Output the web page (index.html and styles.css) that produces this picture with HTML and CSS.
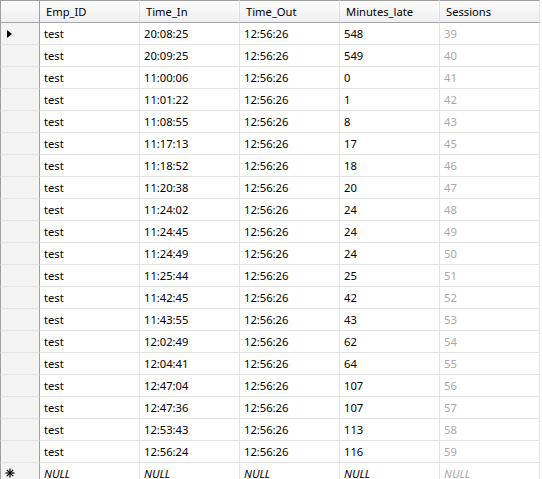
FILE: index.html
```html
<!DOCTYPE html>
<html>
<head>
<meta charset="utf-8">
<link rel="stylesheet" href="styles.css">
</head>
<body>
<div class="grid">
  <div class="hd sel"></div>
  <div class="hd">Emp_ID</div>
  <div class="hd">Time_In</div>
  <div class="hd">Time_Out</div>
  <div class="hd">Minutes_late</div>
  <div class="hd">Sessions</div>
</div>
<div class="grid" id="rows"></div>
<script src="app.js"></script>
</body>
</html>
```
FILE: styles.css
```css
html, body { margin: 0; padding: 0; background: #fff; }
body {
  font-family: "Segoe UI", "Noto Sans", "Open Sans", sans-serif;
  font-size: 11.2px;
  color: #000;
  width: 542px;
  height: 479px;
  overflow: hidden;
}
.grid {
  display: grid;
  grid-template-columns: 40px repeat(5, 100px);
  width: 540px;
}
.grid > div {
  height: 21px;
  line-height: 22px;
  border-right: 1px solid #e3e3e3;
  border-bottom: 1px solid #e3e3e3;
  padding-left: 4px;
  white-space: nowrap;
  overflow: hidden;
  box-sizing: content-box;
  width: calc(100% - 5px);
}
.hd {
  background: linear-gradient(#fcfcfc, #efeff2);
  border-top: 1px solid #a0a0a0;
  height: 21px !important;
  line-height: 21px !important;
  border-bottom: 1px solid #a5a5a5 !important;
  border-right: 1px solid #dedee4 !important;
  padding-left: 6px !important;
  width: calc(100% - 7px) !important;
}
.hd.sel {
  border-right: 1px solid #a0a0a0 !important;
  border-left: 1px solid #a0a0a0;
  padding-left: 0 !important;
  width: 38px !important;
}
.grid > .rs {
  background: #f3f3f3;
  border-left: 1px solid #a0a0a0;
  border-right: 1px solid #a0a0a0;
  border-bottom: 1px solid #e6e6e6;
  position: relative;
  padding-left: 0;
  width: 38px;
}
.ro { color: #a8a8a8; }
.null { font-style: italic; }
.arrow {
  position: absolute;
  left: 6px; top: 7px;
  width: 0; height: 0;
  border-top: 4px solid transparent;
  border-bottom: 4px solid transparent;
  border-left: 5px solid #000;
}
.star {
  position: absolute;
  left: 4px; top: 5px;
  width: 10px; height: 10px;
}
```
FILE: app.js
```js
var data = [
["20:08:25",548,39],["20:09:25",549,40],["11:00:06",0,41],["11:01:22",1,42],
["11:08:55",8,43],["11:17:13",17,45],["11:18:52",18,46],["11:20:38",20,47],
["11:24:02",24,48],["11:24:45",24,49],["11:24:49",24,50],["11:25:44",25,51],
["11:42:45",42,52],["11:43:55",43,53],["12:02:49",62,54],["12:04:41",64,55],
["12:47:04",107,56],["12:47:36",107,57],["12:53:43",113,58],["12:56:24",116,59]
];
var g = document.getElementById('rows');
var h = '';
data.forEach(function (r, i) {
  h += '<div class="rs">' + (i === 0 ? '<span class="arrow"></span>' : '') + '</div>' +
       '<div>test</div><div>' + r[0] + '</div><div>12:56:26</div><div>' + r[1] +
       '</div><div class="ro">' + r[2] + '</div>';
});
h += '<div class="rs"><svg class="star" viewBox="0 0 10 10"><g stroke="#000" stroke-width="1.2">' +
     '<line x1="5" y1="0.5" x2="5" y2="9.5"/><line x1="0.5" y1="5" x2="9.5" y2="5"/>' +
     '<line x1="1.8" y1="1.8" x2="8.2" y2="8.2"/><line x1="8.2" y1="1.8" x2="1.8" y2="8.2"/></g></svg></div>' +
     '<div class="null">NULL</div><div class="null">NULL</div><div class="null">NULL</div><div class="null">NULL</div><div class="null ro">NULL</div>';
g.innerHTML = h;
```
